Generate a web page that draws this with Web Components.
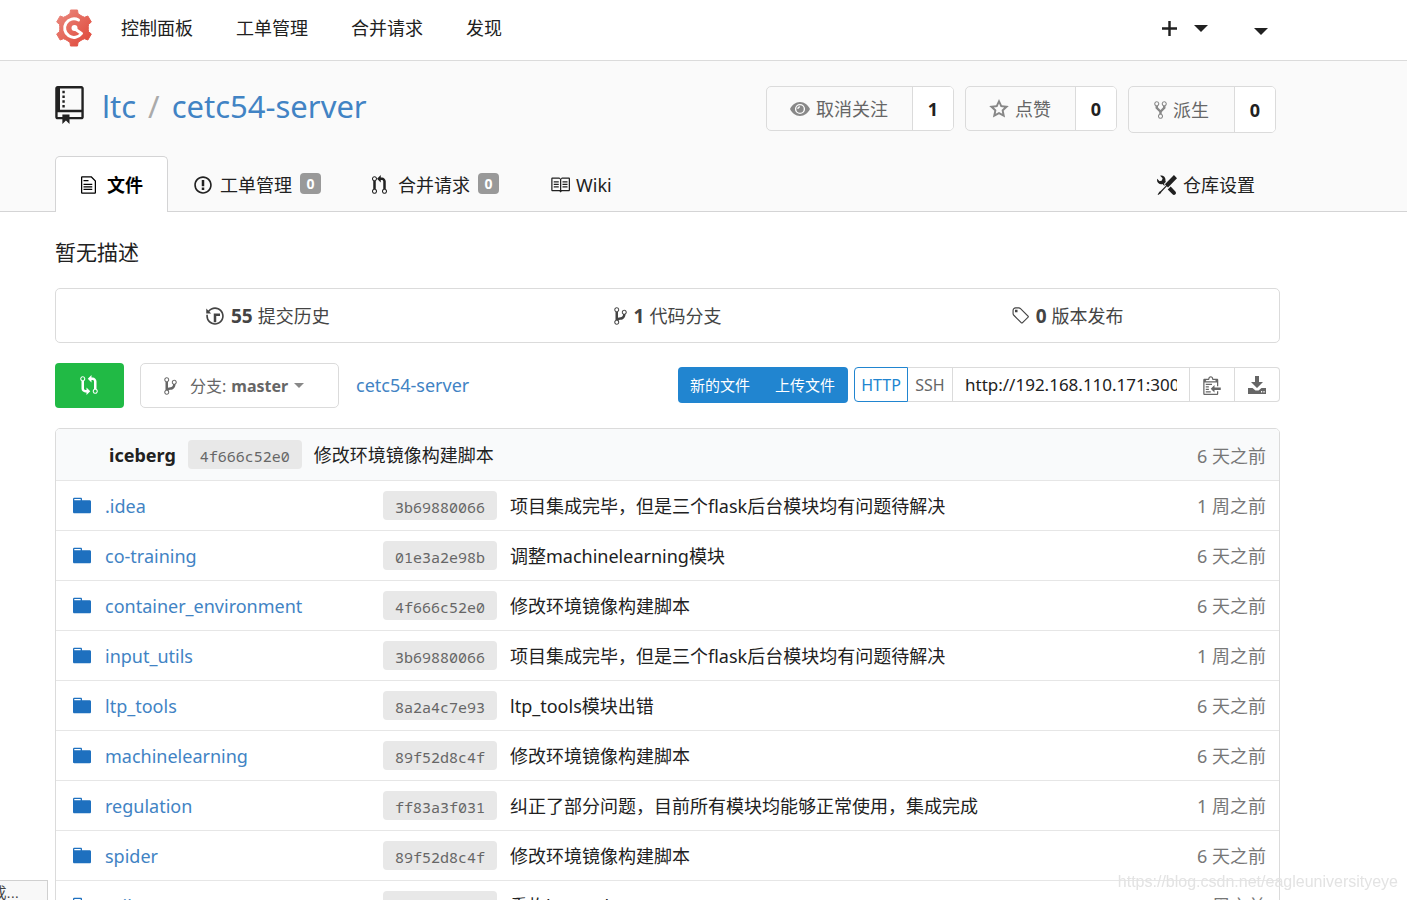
<!DOCTYPE html>
<html lang="zh-CN">
<head>
<meta charset="utf-8">
<title>ltc/cetc54-server</title>
<style>
html, body { margin: 0; }
body { background: #fff; color: #212121; font: 18px/24px "Noto Sans", "Noto Sans CJK SC", sans-serif; overflow: hidden; height: 100vh; }
</style>
</head>
<body>
<repo-page></repo-page>
<script>
const ICONS = {
  repo: [12, 16, "M4 9H3V8h1v1zm0-3H3v1h1V6zm0-2H3v1h1V4zm0-2H3v1h1V2zm8-1v12c0 .55-.45 1-1 1H6v2l-1.5-1.5L3 16v-2H1c-.55 0-1-.45-1-1V1c0-.55.45-1 1-1h10c.55 0 1 .45 1 1zm-1 10H1v2h2v-1h3v1h5v-2zm0-10H2v9h9V1z"],
  file: [12, 16, "M6 5H2V4h4v1zM2 8h7V7H2v1zm0 2h7V9H2v1zm0 2h7v-1H2v1zm10-7.5V14c0 .55-.45 1-1 1H1c-.55 0-1-.45-1-1V2c0-.55.45-1 1-1h7.5L12 4.5zM11 5L8 2H1v12h10V5z"],
  issue: [14, 16, "M7 2.3c3.14 0 5.7 2.56 5.7 5.7s-2.56 5.7-5.7 5.7A5.71 5.71 0 0 1 1.3 8c0-3.14 2.56-5.7 5.7-5.7zM7 1C3.14 1 0 4.14 0 8s3.14 7 7 7 7-3.14 7-7-3.14-7-7-7zm1 3H6v5h2V4zm0 6H6v2h2v-2z"],
  pull: [12, 16, "M11 11.28V5c-.03-.78-.34-1.47-.94-2.06C9.46 2.35 8.78 2.03 8 2H7V0L4 3l3 3V4h1c.27.02.48.11.69.31.21.2.3.42.31.69v6.28A1.993 1.993 0 0 0 10 15a1.993 1.993 0 0 0 1-3.72zm-1 2.92c-.66 0-1.2-.55-1.2-1.2 0-.65.55-1.2 1.2-1.2.65 0 1.2.55 1.2 1.2 0 .65-.55 1.2-1.2 1.2zM4 3c0-1.11-.89-2-2-2a1.993 1.993 0 0 0-1 3.72v6.56A1.993 1.993 0 0 0 2 15a1.993 1.993 0 0 0 1-3.72V4.72c.59-.34 1-.98 1-1.72zm-.8 10c0 .66-.55 1.2-1.2 1.2-.65 0-1.2-.55-1.2-1.2 0-.65.55-1.2 1.2-1.2.65 0 1.2.55 1.2 1.2zM2 4.2C1.34 4.2.8 3.65.8 3c0-.65.55-1.2 1.2-1.2.65 0 1.2.55 1.2 1.2 0 .65-.55 1.2-1.2 1.2z"],
  book: [16, 16, "M3 5h4v1H3V5zm0 3h4V7H3v1zm0 2h4V9H3v1zm11-5h-4v1h4V5zm0 2h-4v1h4V7zm0 2h-4v1h4V9zm2-6v9c0 .55-.45 1-1 1H9.5l-1 1-1-1H2c-.55 0-1-.45-1-1V3c0-.55.45-1 1-1h5.5l1 1 1-1H15c.55 0 1 .45 1 1zm-8 .5L7.5 3H2v9h6V3.5zm7-.5H9.5l-.5.5V12h6V3z"],
  tools: [16, 16, "M4.48 7.27c.26.26 1.28 1.33 1.28 1.33l.56-.58-.88-.91 1.69-1.8s-.76-.74-.43-.45c.32-1.19.03-2.51-.87-3.44C4.93.5 3.66.2 2.52.51l1.93 2-.51 1.96-1.89.52-1.93-1.99C-.19 4.17.1 5.48 1 6.4c.94.98 2.29 1.26 3.48.87zm6.44 1.94l-2.33 2.3 3.84 3.98c.31.33.73.49 1.14.49.41 0 .82-.16 1.14-.49.63-.65.63-1.7 0-2.35l-3.79-3.93zM16 2.53L13.55 0 6.33 7.46l.88.91-4.31 4.46-.99.53-1.39 2.27.35.37 2.2-1.44.51-1.02L7.9 9.08l.88.91L16 2.53z"],
  history: [14, 16, "M8 13H6V6h5v2H8v5zM7 1C4.81 1 2.87 2.02 1.59 3.59L0 2v4h4L2.5 4.5C3.55 3.17 5.17 2.3 7 2.3c3.14 0 5.7 2.56 5.7 5.7s-2.56 5.7-5.7 5.7A5.71 5.71 0 0 1 1.3 8c0-.34.03-.67.09-1H.08C.03 7.33 0 7.66 0 8c0 3.86 3.14 7 7 7s7-3.14 7-7-3.14-7-7-7z"],
  branch: [10, 16, "M10 5c0-1.11-.89-2-2-2a1.993 1.993 0 0 0-1 3.72v.3c-.02.52-.23.98-.63 1.38-.4.4-.86.61-1.38.63-.83.02-1.48.16-2 .45V4.72a1.993 1.993 0 0 0-1-3.72C.88 1 0 1.89 0 3a2 2 0 0 0 1 1.72v6.56c-.59.35-1 .99-1 1.72 0 1.11.89 2 2 2 1.11 0 2-.89 2-2 0-.53-.2-1-.53-1.36.09-.06.48-.41.59-.47.25-.11.56-.17.94-.17 1.05-.05 1.95-.45 2.75-1.25S8.95 7.77 9 6.73h-.02C9.59 6.37 10 5.73 10 5zM2 1.8c.66 0 1.2.55 1.2 1.2 0 .65-.55 1.2-1.2 1.2C1.35 4.2.8 3.65.8 3c0-.65.55-1.2 1.2-1.2zm0 12.41c-.66 0-1.2-.55-1.2-1.2 0-.65.55-1.2 1.2-1.2.65 0 1.2.55 1.2 1.2 0 .65-.55 1.2-1.2 1.2zm6-8c-.66 0-1.2-.55-1.2-1.2 0-.65.55-1.2 1.2-1.2.65 0 1.2.55 1.2 1.2 0 .65-.55 1.2-1.2 1.2z"],
  tag: [14, 16, "M7.73 1.73C7.26 1.26 6.62 1 5.96 1H3.5C2.13 1 1 2.13 1 3.5v2.47c0 .66.27 1.3.73 1.77l6.06 6.06c.39.39 1.02.39 1.41 0l4.59-4.59a.996.996 0 0 0 0-1.41L7.73 1.73zM2.38 7.09c-.31-.3-.47-.7-.47-1.13V3.5c0-.88.72-1.59 1.59-1.59h2.47c.42 0 .83.16 1.13.47l6.14 6.13-4.73 4.73-6.13-6.15zM3.01 3h2v2H3V3h.01z"],
  compare: [14, 16, "M5 12H4c-.27-.02-.48-.11-.69-.31-.21-.2-.3-.42-.31-.69V4.72A1.993 1.993 0 0 0 2 1a1.993 1.993 0 0 0-1 3.72V11c.03.78.34 1.47.94 2.06.6.59 1.28.91 2.06.94h1v2l3-3-3-3v2zM2 1.8c.66 0 1.2.55 1.2 1.2 0 .65-.55 1.2-1.2 1.2C1.35 4.2.8 3.65.8 3c0-.65.55-1.2 1.2-1.2zm11 9.48V5c-.03-.78-.34-1.47-.94-2.06-.6-.59-1.28-.91-2.06-.94H9V0L6 3l3 3V4h1c.27.02.48.11.69.31.21.2.3.42.31.69v6.28A1.993 1.993 0 0 0 12 15a1.993 1.993 0 0 0 1-3.72zm-1 2.92c-.66 0-1.2-.55-1.2-1.2 0-.65.55-1.2 1.2-1.2.65 0 1.2.55 1.2 1.2 0 .65-.55 1.2-1.2 1.2z"],
  clippy: [14, 16, "M2 13h4v1H2v-1zm5-6H2v1h5V7zm2 3V8l-3 3 3 3v-2h5v-2H9zM4.5 9H2v1h2.5V9zM2 12h2.5v-1H2v1zm9 1h1v2c-.02.28-.11.52-.3.7-.19.18-.42.28-.7.3H1c-.55 0-1-.45-1-1V4c0-.55.45-1 1-1h3c0-1.11.89-2 2-2 1.11 0 2 .89 2 2h3c.55 0 1 .45 1 1v5h-1V6H1v9h10v-2zM2 5h8c0-.55-.45-1-1-1H8c-.55 0-1-.45-1-1s-.45-1-1-1-1 .45-1 1-.45 1-1 1H3c-.55 0-1 .45-1 1z"],
  fork: [10, 16, "M8 1a1.993 1.993 0 0 0-1 3.72V6L5 8 3 6V4.72A1.993 1.993 0 0 0 2 1a1.993 1.993 0 0 0-1 3.72V6.5l3 3v1.78A1.993 1.993 0 0 0 5 15a1.993 1.993 0 0 0 1-3.72V9.5l3-3V4.72A1.993 1.993 0 0 0 8 1zM2 4.2C1.34 4.2.8 3.65.8 3c0-.65.55-1.2 1.2-1.2.65 0 1.2.55 1.2 1.2 0 .65-.55 1.2-1.2 1.2zm3 10c-.66 0-1.2-.55-1.2-1.2 0-.65.55-1.2 1.2-1.2.65 0 1.2.55 1.2 1.2 0 .65-.55 1.2-1.2 1.2zm3-10c-.66 0-1.2-.55-1.2-1.2 0-.65.55-1.2 1.2-1.2.65 0 1.2.55 1.2 1.2 0 .65-.55 1.2-1.2 1.2z"],
  folder: [14, 16, "M13 4H7V3c0-.66-.31-1-1-1H1c-.55 0-1 .45-1 1v10c0 .55.45 1 1 1h12c.55 0 1-.45 1-1V5c0-.55-.45-1-1-1zM6 4H1V3h5v1z"],
  plus: [16, 16, "M6.700 0h2.600v6.700H16v2.600H9.300V16H6.700V9.300H0V6.700h6.700z"],
  caret: [14, 7, "M0 0h14L7 7z"],
  eye: [20, 14, "M10 0C5.500 0 2 3 0 7c2 4 5.500 7 10 7s8-3 10-7C18 3 14.500 0 10 0zM10 1.900a5.100 5.100 0 1 1 0 10.200a5.100 5.100 0 0 1 0-10.200zM10 3.300a3.700 3.700 0 1 0 0 7.400a3.700 3.700 0 0 0 0-7.400zM10 4.300v1.200A1.500 1.500 0 0 0 8.500 7H7.300A2.700 2.700 0 0 1 10 4.300z"],
  star: [20, 20, "M10 0l2.900 6.300 6.900.8-5.100 4.700 1.400 6.800L10 15.200l-6.100 3.400 1.400-6.800L.2 7.100l6.900-.8zM10 4.600L8.400 8l-3.600.5 2.600 2.500-.7 3.700L10 12.900l3.300 1.800-.7-3.700 2.600-2.500L11.600 8z"],
  download: [18, 18, "M7 0h4v6h4l-6 6-6-6h4zM0 12h4.500l3 2.600h3L13.500 12H18v6H0zM13 15v1.500h1.200V15zM15.400 15v1.500h1.200V15z"]
};

const define = (name, render) => customElements.define(name, class extends HTMLElement {
  connectedCallback() {
    if (!this.shadowRoot) this.attachShadow({ mode: "open" }).innerHTML = render(this);
  }
});

define("app-icon", el => {
  const [w, h, d] = ICONS[el.getAttribute("name")];
  const height = Number(el.getAttribute("size") || 20);
  const width = Math.round(height * w / h);
  return `<style>:host{display:inline-flex;flex:none}svg{display:block;fill:currentColor}</style>
  <svg width="${width}" height="${height}" viewBox="0 0 ${w} ${h}" aria-hidden="true"><path fill-rule="evenodd" d="${d}"/></svg>`;
});

/* six-toothed gear, one tooth every 60 degrees round (19, 19) */
const gear = () => {
  const pts = [];
  for (let i = 0; i < 6; i++) {
    const a = i * Math.PI / 3;
    for (const [x, y] of [[-6, -13], [-4, -14.5], [-3.5, -18], [3.5, -18], [4, -14.5], [6, -13]]) {
      pts.push((19 + x * Math.cos(a) - y * Math.sin(a)).toFixed(2) + " " + (19 + x * Math.sin(a) + y * Math.cos(a)).toFixed(2));
    }
  }
  return "M" + pts.join("L") + "z";
};

define("app-logo", () => `<style>:host{display:block}svg{display:block}</style>
<svg width="38" height="38" viewBox="0 0 38 38" role="img" aria-label="Gogs">
 <defs><linearGradient id="g" x1="0" y1="0" x2="1" y2="1"><stop offset="0" stop-color="#ea8a80"/><stop offset="1" stop-color="#df4536"/></linearGradient></defs>
 <path fill="url(#g)" stroke="url(#g)" stroke-width="1" stroke-linejoin="round" d="${gear()}"/>
 <path fill="none" stroke="#fff" stroke-width="3" stroke-linecap="round" stroke-linejoin="round" d="M23.500 11A9.300 9.300 0 1 0 26.500 24.500L20 20"/>
 <circle cx="19.500" cy="19" r="3" fill="#fff"/>
</svg>`);

define("top-bar", () => `<style>
:host{display:block;background:#fff;border-bottom:1px solid #dbdbdb}
nav{box-sizing:border-box;display:flex;align-items:center;height:60px;padding:0 139px 4px 55px}
a{color:inherit;text-decoration:none;margin-right:43px}
app-logo{margin-right:28px}
button{display:flex;align-items:center;gap:17px;background:none;border:0;padding:0;color:inherit}
.create{margin:0 46px 0 auto}
.user{padding-top:7px}
</style>
<nav><app-logo></app-logo><a href="#">控制面板</a><a href="#">工单管理</a><a href="#">合并请求</a><a href="#">发现</a>
<button class="create" aria-label="创建"><app-icon name="plus" size="15"></app-icon><app-icon name="caret" size="7"></app-icon></button>
<button class="user" aria-label="用户"><app-icon name="caret" size="7"></app-icon></button></nav>`);

define("count-button", el => `<style>
:host{display:flex;height:45px;box-sizing:border-box;border:1px solid #dbdbdb;border-radius:5px;overflow:hidden;background:#fafafa}
:host([tall]){height:47px}
button{display:flex;align-items:center;justify-content:center;gap:6px;border:0;background:none;padding:0 24px 0 23px;color:#666;font:inherit}
:host([tall]) button{padding:0 25px}
app-icon{color:#888}
a{display:flex;align-items:center;justify-content:center;width:40px;border-left:1px solid #dbdbdb;background:#fff;font-weight:700;color:#212121;text-decoration:none}
</style><button><app-icon name="${el.getAttribute("icon")}" size="${el.getAttribute("size")}"></app-icon><slot></slot></button><a href="#">${el.getAttribute("count")}</a>`);

define("repo-tab", el => `<style>
:host{display:block}
a{box-sizing:border-box;display:flex;align-items:center;height:56px;padding:0 24px 0 25px;border:1px solid transparent;border-bottom:0;color:inherit;text-decoration:none}
:host([active]) a{background:#fff;border-color:#d4d4d5;border-radius:5px 5px 0 0;font-weight:700;color:#000}
app-icon{width:20px;margin-right:6px}
.n{background:#999;color:#fff;border-radius:4px;font-size:14px;line-height:21px;width:21px;text-align:center;font-weight:700;margin:0 0 2px 8px}
</style><a href="#"><app-icon name="${el.getAttribute("icon")}"></app-icon><slot></slot>${el.hasAttribute("count") ? `<span class="n">${el.getAttribute("count")}</span>` : ""}</a>`);

define("repo-header", () => `<style>
:host{display:block;background:#fafafa;border-bottom:1px solid #d4d4d5}
.title{display:flex;align-items:flex-start;height:70px;padding:25px 131px 0 55px}
h1{display:flex;align-items:center;font-size:31px;line-height:40px;font-weight:400;margin:0 auto 0 0}
h1 a{color:#4183c4;text-decoration:none}
h1 app-icon{margin-right:18px;align-self:flex-start}
h1 span{color:#aaa;margin:0 12px}
.acts{display:flex;align-items:flex-start;gap:11px}
.tabs{display:flex;padding:0 127px 0 55px;margin-bottom:-1px}
.tabs repo-tab:last-child{margin-left:auto}
</style>
<div class="title"><h1><app-icon name="repo" size="38"></app-icon><a href="#">ltc</a><span>/</span><a href="#">cetc54-server</a></h1>
<div class="acts"><count-button icon="eye" size="14" count="1">取消关注</count-button><count-button icon="star" size="20" count="0">点赞</count-button><count-button icon="fork" size="20" count="0" tall>派生</count-button></div></div>
<div class="tabs"><repo-tab icon="file" active>文件</repo-tab><repo-tab icon="issue" count="0">工单管理</repo-tab><repo-tab icon="pull" count="0">合并请求</repo-tab><repo-tab icon="book">Wiki</repo-tab><repo-tab icon="tools">仓库设置</repo-tab></div>`);

define("repo-stats", () => `<style>
:host{display:grid;grid-template-columns:repeat(3,1fr);box-sizing:border-box;height:55px;padding:0 12px;border:1px solid #dbdbdb;border-radius:5px}
a{display:flex;align-items:center;justify-content:center;color:#444;text-decoration:none}
b{font-size:19px;margin:0 5px 0 7px}
</style><a href="#"><app-icon name="history"></app-icon><b>55</b>提交历史</a><a href="#"><app-icon name="branch"></app-icon><b>1</b>代码分支</a><a href="#"><app-icon name="tag"></app-icon><b>0</b>版本发布</a>`);

define("repo-tools", () => `<style>
:host{display:flex;align-items:center}
button{font:inherit;cursor:pointer}
.compare{display:flex;align-items:center;justify-content:center;width:69px;height:45px;border:0;border-radius:4px;background:#21ba45;color:#fff;margin-right:16px;padding:0 2px 2px 0}
.branch{box-sizing:border-box;display:flex;align-items:center;width:199px;height:45px;padding:0 23px;border:1px solid #dbdbdb;border-radius:5px;background:#fff;color:#666;font-size:16px;margin-right:17px}
.branch app-icon:first-child{margin-right:13px}
.branch app-icon:last-child{color:#888}
.branch b{margin:0 6px 0 5px}
.path{color:#4183c4;text-decoration:none;margin:0 auto 2px 0}
.new{display:flex;height:36px;border-radius:4px;background:#2185d0;margin:0 6px 1px 0}
.new button{border:0;background:none;color:#fff;font-size:15px;padding:0 13px 0 12px}
.clone{display:flex;height:35px;margin-bottom:2px}
.clone>*{box-sizing:border-box;border:1px solid #dbdbdb;border-left:0;background:#fff;color:#666;padding:0;height:35px}
.clone .http{width:54px;border:1px solid #2185d0;border-radius:4px 0 0 4px;color:#2185d0}
.clone .http,.clone .ssh{font-size:16px}
.clone .ssh{width:45px}
.clone input{width:237px;padding:0 12px;color:#212121;font:inherit;font-size:17px;border-radius:0}
.clone .icon{display:flex;align-items:center;justify-content:center;width:45px}
.clone .icon:last-child{border-radius:0 4px 4px 0}
</style>
<button class="compare" aria-label="比较"><app-icon name="compare"></app-icon></button>
<button class="branch"><app-icon name="branch" size="20"></app-icon>分支:<b>master</b><app-icon name="caret" size="5"></app-icon></button>
<a class="path" href="#">cetc54-server</a>
<div class="new"><button>新的文件</button><button>上传文件</button></div>
<div class="clone"><button class="http">HTTP</button><button class="ssh">SSH</button><input aria-label="仓库地址" readonly value="http://192.168.110.171:3000/ltc/cetc54-server.git"><button class="icon" aria-label="复制"><app-icon name="clippy"></app-icon></button><button class="icon" aria-label="下载"><app-icon name="download" size="18"></app-icon></button></div>`);

const ROWS = [
  [".idea", "3b69880066", "项目集成完毕，但是三个flask后台模块均有问题待解决", "1 周之前"],
  ["co-training", "01e3a2e98b", "调整machinelearning模块", "6 天之前"],
  ["container_environment", "4f666c52e0", "修改环境镜像构建脚本", "6 天之前"],
  ["input_utils", "3b69880066", "项目集成完毕，但是三个flask后台模块均有问题待解决", "1 周之前"],
  ["ltp_tools", "8a2a4c7e93", "ltp_tools模块出错", "6 天之前"],
  ["machinelearning", "89f52d8c4f", "修改环境镜像构建脚本", "6 天之前"],
  ["regulation", "ff83a3f031", "纠正了部分问题，目前所有模块均能够正常使用，集成完成", "1 周之前"],
  ["spider", "89f52d8c4f", "修改环境镜像构建脚本", "6 天之前"],
  ["utils", "3b69880066", "重构ltp_tools", "1 周之前"]
];

define("file-table", () => `<style>
:host{display:block;border:1px solid #dbdbdb;border-radius:5px;overflow:hidden}
table{width:100%;border-collapse:collapse;table-layout:fixed}
td,th{padding:0;font-weight:400;text-align:left;white-space:nowrap;height:49px;border-top:1px solid #e6e6e6}
th{background:#f9fafb;height:51px;border-top:0}
.name{width:327px}
.time{width:120px;padding-right:13px;text-align:right;color:#777}
th.time{box-sizing:border-box;padding-top:3px}
.line,.last{display:flex;align-items:center}
.line{padding-left:17px;gap:14px}
.line app-icon{color:#1e70bf}
.line a{color:#4183c4;text-decoration:none}
.last{padding-left:53px;gap:12px}
.msg{display:flex;align-items:center;gap:13px}
code{display:block;box-sizing:border-box;width:114px;height:29px;padding-top:2px;border-radius:4px;background:#e8e8e8;color:#666;font:15px/28px "Noto Sans Mono","DejaVu Sans Mono",monospace;text-align:center}
</style><table><colgroup><col class="name"><col><col class="time"></colgroup>
<thead><tr><th colspan="2"><div class="last"><b>iceberg</b><code>4f666c52e0</code><span>修改环境镜像构建脚本</span></div></th><th class="time">6 天之前</th></tr></thead>
<tbody>${ROWS.map(r => `<tr><td><div class="line"><app-icon name="folder" size="21"></app-icon><a href="#">${r[0]}</a></div></td><td><div class="msg"><code>${r[1]}</code><span>${r[2]}</span></div></td><td class="time">${r[3]}</td></tr>`).join("")}</tbody></table>`);

define("repo-page", () => `<style>
:host{display:block}
main{padding:0 127px 0 55px}
p{margin:0;padding:24px 0 20px;font-size:21px;line-height:32px}
repo-tools{margin:20px 0}
.status,.mark{position:fixed;bottom:0;font-family:"Liberation Sans","Noto Sans CJK SC",sans-serif}
.status{left:0;box-sizing:border-box;width:48px;height:20px;background:#f8f8f8;border:1px solid #d0d0d0;border-width:1px 1px 0 0;font-size:15px;line-height:24px;overflow:hidden;display:flex;justify-content:flex-end;padding-right:28px;white-space:nowrap;color:#444}
.mark{right:9px;bottom:6px;font-size:16px;color:#e3e3e3}
</style><top-bar></top-bar><repo-header></repo-header>
<main><p>暂无描述</p><repo-stats></repo-stats><repo-tools></repo-tools><file-table></file-table></main>
<div class="status">成...</div><div class="mark">https://blog.csdn.net/eagleuniversityeye</div>`);
</script>
</body>
</html>
